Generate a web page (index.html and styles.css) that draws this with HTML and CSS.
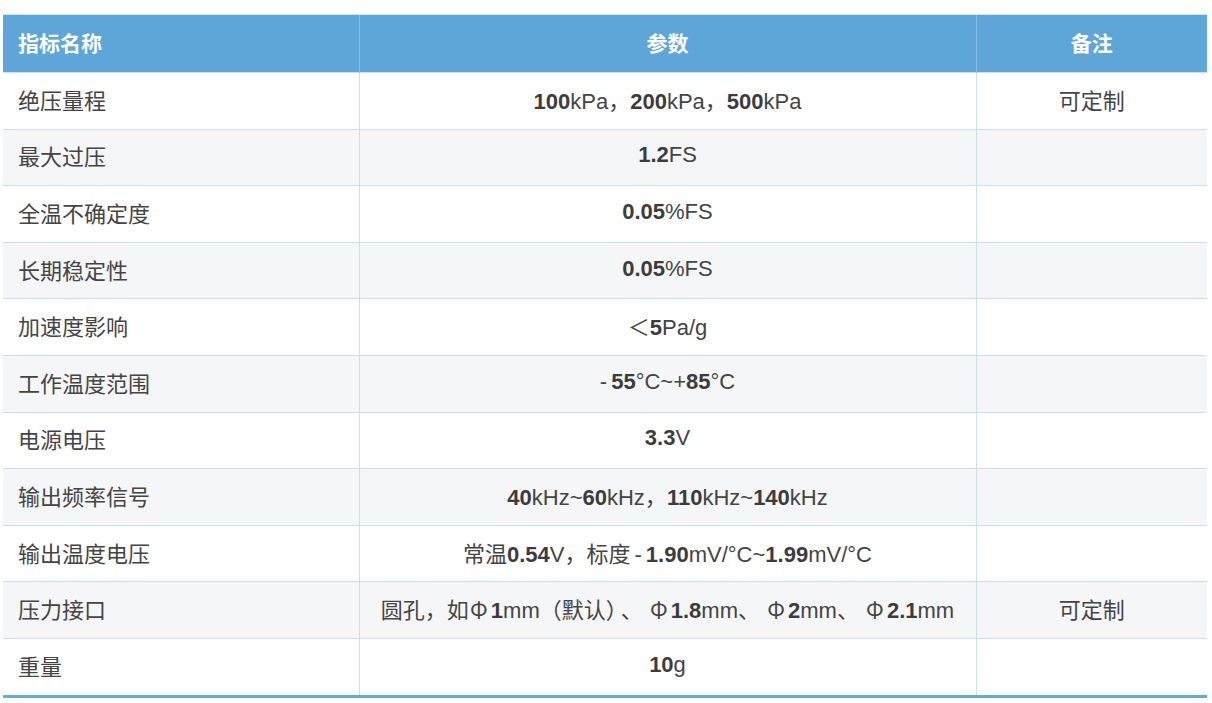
FILE: index.html
```html
<!DOCTYPE html>
<html lang="zh-CN">
<head>
<meta charset="utf-8">
<link rel="stylesheet" href="styles.css">
</head>
<body>
<table class="spec">
  <colgroup>
    <col class="c1"><col class="c2"><col class="c3">
  </colgroup>
  <thead>
    <tr><th class="name">指标名称</th><th>参数</th><th>备注</th></tr>
  </thead>
  <tbody>
    <tr><td class="name">绝压量程</td><td><b>100</b>kPa，<b>200</b>kPa，<b>500</b>kPa</td><td>可定制</td></tr>
    <tr><td class="name">最大过压</td><td><b>1.2</b>FS</td><td></td></tr>
    <tr><td class="name">全温不确定度</td><td><b>0.05</b>%FS</td><td></td></tr>
    <tr><td class="name">长期稳定性</td><td><b>0.05</b>%FS</td><td></td></tr>
    <tr><td class="name">加速度影响</td><td>＜<b>5</b>Pa/g</td><td></td></tr>
    <tr><td class="name">工作温度范围</td><td><span class="dash">-</span><b>55</b>°C~+<b>85</b>°C</td><td></td></tr>
    <tr><td class="name">电源电压</td><td><b>3.3</b>V</td><td></td></tr>
    <tr><td class="name">输出频率信号</td><td><b>40</b>kHz~<b>60</b>kHz，<b>110</b>kHz~<b>140</b>kHz</td><td></td></tr>
    <tr><td class="name">输出温度电压</td><td>常温<b>0.54</b>V，标度<span class="dash dash-mid">-</span><b>1.90</b>mV/°C~<b>1.99</b>mV/°C</td><td></td></tr>
    <tr><td class="name">压力接口</td><td>圆孔，如<span class="phi">Φ</span><b>1</b>mm（默认）<span class="sep sep-first">、</span><span class="phi">Φ</span><b>1.8</b>mm<span class="sep">、</span><span class="phi">Φ</span><b>2</b>mm<span class="sep">、</span><span class="phi">Φ</span><b>2.1</b>mm</td><td>可定制</td></tr>
    <tr><td class="name">重量</td><td><b>10</b>g</td><td></td></tr>
  </tbody>
</table>
</body>
</html>
```
FILE: styles.css
```css
html, body {
  margin: 0;
  padding: 0;
  background: #ffffff;
}
body {
  font-family: "Liberation Sans", "Noto Sans CJK SC", sans-serif;
  color: #444444;
}
.spec {
  margin: 14px 0 0 3px;
  width: 1204px;
  border-collapse: collapse;
  table-layout: fixed;
  font-size: 22px;
}
.c1 { width: 356px; }
.c2 { width: 617px; }
.c3 { width: 231px; }
.spec th {
  height: 53px;
  background: #5ea6d8;
  color: #ffffff;
  font-weight: bold;
  font-family: "Noto Sans CJK SC", sans-serif;
  font-size: 21px;
  text-align: center;
  border-left: 1px solid #8fc1e6;
  border-top: 1px solid #cfe3f3;
  padding: 0 0 4px 0;
}
.spec th:first-child { border-left: none; }
.spec td {
  height: 51.6px;
  padding: 0 0 4px 0;
  text-align: center;
  border-top: 1px solid #c9def0;
  border-left: 1px solid #c9def0;
  white-space: nowrap;
}
.spec td:first-child { border-left: none; }
.spec .name {
  text-align: left;
  padding-left: 15px;
}
.spec tbody tr:nth-child(even) td { background: #f5f6f7; }
.spec tbody tr:last-child td { border-bottom: 3px solid #67a9da; }
.spec b { font-weight: bold; color: #3c3c3c; }
.phi {
  font-family: "Noto Sans CJK SC", sans-serif;
  display: inline-block;
  width: 20px;
  text-align: center;
  margin-right: 2px;
}
.sep { margin: 0 6px 0 0; }
.sep-first { margin-left: 4px; }
.dash { margin-right: 4px; }
.dash-mid { margin-left: 4px; }
```
